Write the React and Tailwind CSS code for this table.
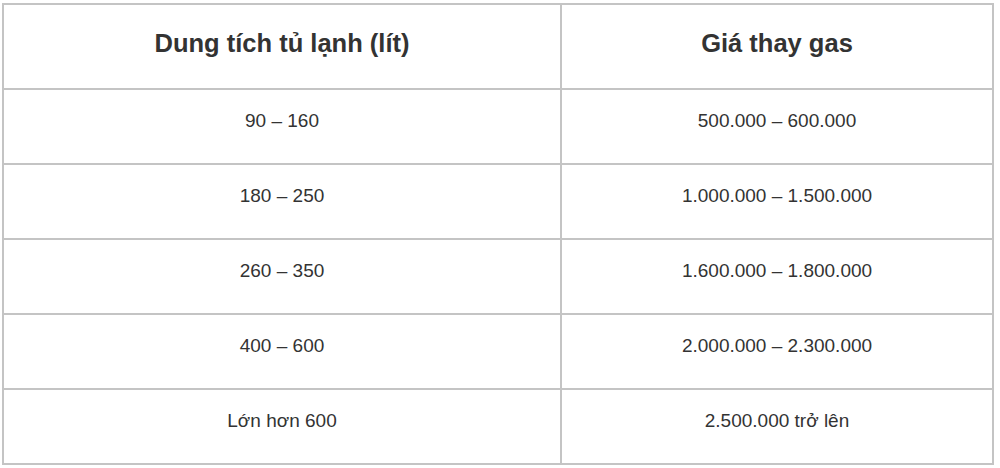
export default function App() {
    const rows = [
        ["90 – 160", "500.000 – 600.000"],
        ["180 – 250", "1.000.000 – 1.500.000"],
        ["260 – 350", "1.600.000 – 1.800.000"],
        ["400 – 600", "2.000.000 – 2.300.000"],
        ["Lớn hơn 600", "2.500.000 trở lên"],
    ]

    return (
        <div className="w-[1000px] h-[468px] bg-white pl-[2px] pt-[3px] font-['Liberation_Sans',Arial,sans-serif] text-[#333]">
            <table className="w-[992px] border-collapse">
                <thead>
                    <tr className="h-[85px]">
                        <th className="w-[558px] border-2 border-[#c4c4c4] pb-[7px] text-[25.5px] font-bold">Dung tích tủ lạnh (lít)</th>
                        <th className="border-2 border-[#c4c4c4] pb-[7px] text-[25.5px] font-bold">Giá thay gas</th>
                    </tr>
                </thead>
                <tbody>
                    {rows.map((r, i) => (
                        <tr key={i} className="h-[75px]">
                            <td className="border-2 border-[#c4c4c4] pb-[10px] text-center text-[19px]">{r[0]}</td>
                            <td className="border-2 border-[#c4c4c4] pb-[10px] text-center text-[19px]">{r[1]}</td>
                        </tr>
                    ))}
                </tbody>
            </table>
        </div>
    )
}
